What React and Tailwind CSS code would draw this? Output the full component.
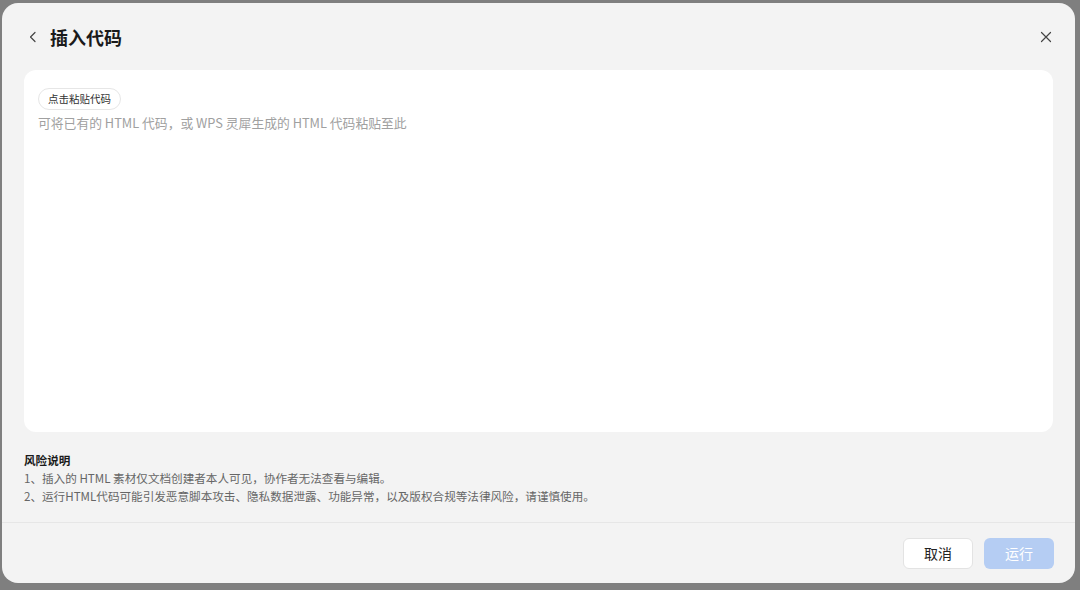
import React from "react";

export default function App() {
  const font = { fontFamily: '"Noto Sans CJK SC", "Noto Sans", sans-serif' };
  return (
    <div className="w-[1080px] h-[590px] bg-[#7f7f7f] pl-[2px] pr-[5px] pt-[3px] pb-[7px]" style={font}>
      <div className="w-full h-full bg-[#f3f3f3] rounded-[16px] flex flex-col overflow-hidden">
        <div className="h-[67px] flex items-center pl-[24px] pr-[22px] shrink-0">
          <svg width="14" height="14" viewBox="0 0 14 14" className="text-[#444]">
            <path d="M9 2.5 L4.5 7 L9 11.5" fill="none" stroke="currentColor" strokeWidth="1.2" strokeLinecap="round" strokeLinejoin="round" />
          </svg>
          <div className="ml-[10px] text-[18px] font-bold text-[#1a1a1a] leading-none">插入代码</div>
          <div className="flex-1" />
          <svg width="14" height="14" viewBox="0 0 14 14" className="text-[#444]">
            <path d="M2.5 2.5 L11.5 11.5 M11.5 2.5 L2.5 11.5" fill="none" stroke="currentColor" strokeWidth="1.2" strokeLinecap="round" />
          </svg>
        </div>
        <div className="mx-[22px] h-[362px] bg-white rounded-[12px] px-[14px] pt-[14px] shrink-0">
          <div className="inline-flex items-center h-[22px] px-[9px] rounded-full border border-[#e6e6e6] text-[10.5px] text-[#333]">点击粘贴代码</div>
          <div className="mt-[3px] text-[12.8px] text-[#a0a0a0] leading-[20px]">可将已有的 HTML 代码，或 WPS 灵犀生成的 HTML 代码粘贴至此</div>
        </div>
        <div className="px-[22px] pt-[19px] shrink-0">
          <div className="text-[11.6px] font-bold text-[#1a1a1a] leading-[18px]">风险说明</div>
          <div className="text-[11.6px] text-[#666] leading-[18px]">1、插入的 HTML 素材仅文档创建者本人可见，协作者无法查看与编辑。</div>
          <div className="text-[11.6px] text-[#666] leading-[18px]">2、运行HTML代码可能引发恶意脚本攻击、隐私数据泄露、功能异常，以及版权合规等法律风险，请谨慎使用。</div>
        </div>
        <div className="mt-[17px] border-t border-[#e6e6e6] flex-1 flex items-center justify-end gap-[11px] pr-[21px] pt-[1px]">
          <div className="w-[70px] h-[31px] rounded-[6px] bg-white border border-[#e3e3e3] flex items-center justify-center text-[14px] text-[#222]">取消</div>
          <div className="w-[70px] h-[31px] rounded-[6px] bg-[#b5cdf3] flex items-center justify-center text-[14px] text-white">运行</div>
        </div>
      </div>
    </div>
  );
}
